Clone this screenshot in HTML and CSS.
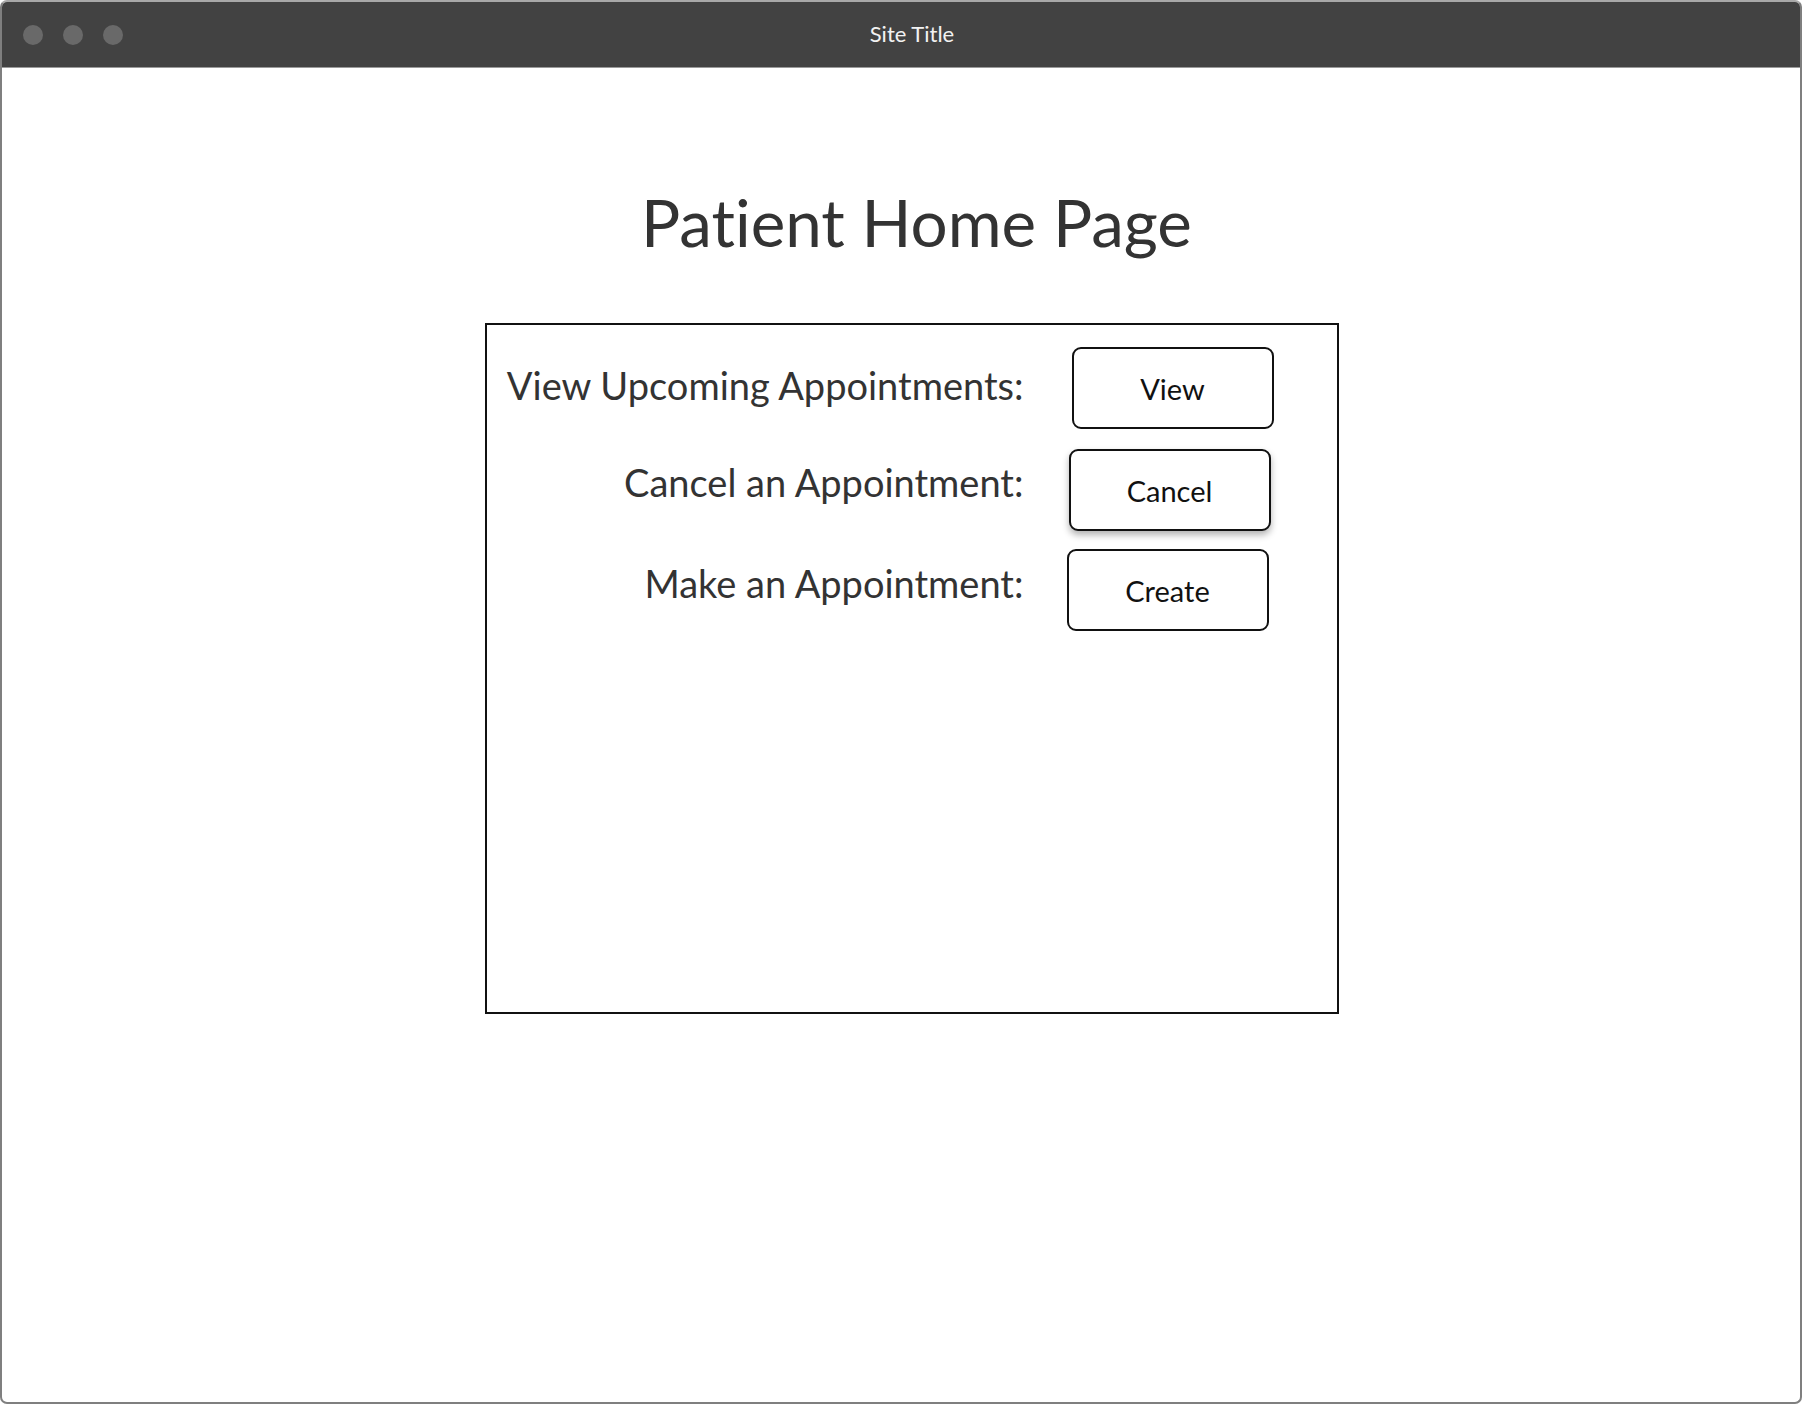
FILE: index.html
```html
<!DOCTYPE html>
<html lang="en">
<head>
<meta charset="utf-8">
<title>Patient Home Page</title>
<link rel="stylesheet" href="styles.css">
</head>
<body>
<div class="window">
  <header class="titlebar">
    <div class="dots">
      <span class="dot"></span>
      <span class="dot"></span>
      <span class="dot"></span>
    </div>
    <div class="site-title">Site Title</div>
    <div class="spacer"></div>
  </header>
  <main class="content">
    <h1 class="page-title">Patient Home Page</h1>
    <section class="panel">
      <div class="row row--view">
        <span class="label">View Upcoming Appointments:</span>
        <button class="btn" type="button">View</button>
      </div>
      <div class="row row--cancel">
        <span class="label">Cancel an Appointment:</span>
        <button class="btn btn--raised" type="button">Cancel</button>
      </div>
      <div class="row row--create">
        <span class="label">Make an Appointment:</span>
        <button class="btn" type="button">Create</button>
      </div>
    </section>
  </main>
</div>
</body>
</html>
```

FILE: styles.css
```css
* { box-sizing: border-box; }

html, body {
  margin: 0;
  padding: 0;
  background: #ffffff;
}

body {
  width: 1804px;
  height: 1408px;
  font-family: Lato, "Open Sans", "Noto Sans", sans-serif;
  font-variant-ligatures: none;
}

.window {
  width: 1802px;
  height: 1404px;
  border: 2px solid #7f7f7f;
  border-top-color: #a8a8a8;
  border-radius: 7px;
  overflow: hidden;
  display: flex;
  flex-direction: column;
  background: #ffffff;
}

.titlebar {
  height: 66px;
  flex: 0 0 66px;
  background: #424242;
  border-bottom: 1px solid #9a9a9a;
  display: grid;
  grid-template-columns: 1fr auto 1fr;
  align-items: center;
}

.dots {
  display: flex;
  gap: 20px;
  padding-left: 21px;
  align-items: center;
}

.dot {
  width: 20px;
  height: 20px;
  border-radius: 50%;
  background: #696969;
}

.site-title {
  color: #f2f2f2;
  font-size: 22px;
  line-height: 26px;
  padding-left: 22px;
  padding-bottom: 2px;
}

.content {
  flex: 1;
  display: flex;
  flex-direction: column;
  align-items: center;
  padding-left: 21px;
  padding-top: 115px;
}

.page-title {
  margin: 0;
  font-weight: 400;
  font-size: 65.5px;
  line-height: 78px;
  color: #333333;
  padding-left: 10px;
  font-variant-ligatures: none;
}

.panel {
  margin-top: 62px;
  width: 854px;
  height: 691px;
  border: 2px solid #111111;
  padding-top: 22px;
  display: flex;
  flex-direction: column;
  gap: 20px;
}

.row {
  display: flex;
  align-items: flex-start;
}

.label {
  width: 537px;
  text-align: right;
  font-size: 38px;
  line-height: 44px;
  color: #333333;
  white-space: nowrap;
}

.btn {
  width: 202px;
  height: 82px;
  border: 2px solid #111111;
  border-radius: 9px;
  background: #ffffff;
  font-family: Lato, "Open Sans", "Noto Sans", sans-serif;
  font-size: 29px;
  color: #111111;
  padding: 0;
  display: flex;
  align-items: center;
  justify-content: center;
}

.btn--raised {
  box-shadow: 0 4px 7px rgba(0, 0, 0, 0.3);
}

.row--view .label { margin-top: 16px; }
.row--view .btn { margin-left: 48px; }

.row--cancel { margin-top: 0; }
.row--cancel .label { margin-top: 11px; }
.row--cancel .btn { margin-left: 45px; }

.row--create { margin-top: -2px; }
.row--create .label { margin-top: 12px; }
.row--create .btn { margin-left: 43px; }
```
